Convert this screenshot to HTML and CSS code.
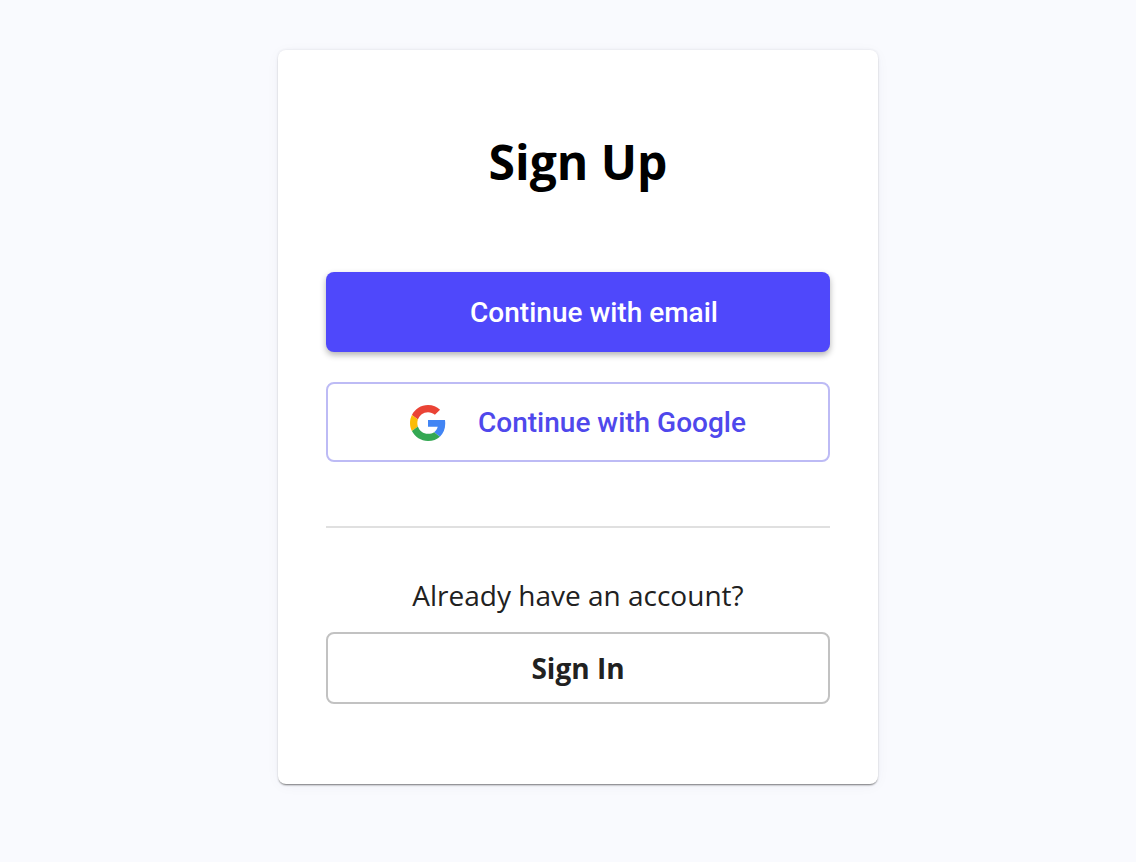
FILE: index.html
```html
<!DOCTYPE html>
<html lang="en">
<head>
<meta charset="utf-8">
<title>Sign Up</title>
<link rel="stylesheet" href="styles.css">
</head>
<body>
<main class="card">
  <h1 class="title">Sign Up</h1>
  <div class="actions">
    <button class="btn btn-primary" type="button">Continue with email</button>
    <button class="btn btn-google" type="button">
      <svg class="g-icon" viewBox="0 0 48 48" aria-hidden="true">
        <path fill="#EA4335" d="M24 9.5c3.54 0 6.71 1.22 9.21 3.6l6.85-6.85C35.9 2.38 30.47 0 24 0 14.62 0 6.51 5.38 2.56 13.22l7.98 6.19C12.43 13.72 17.74 9.5 24 9.5z"/>
        <path fill="#4285F4" d="M46.98 24.55c0-1.57-.15-3.09-.38-4.55H24v9.02h12.94c-.58 2.96-2.26 5.48-4.78 7.18l7.73 6c4.51-4.18 7.09-10.36 7.09-17.65z"/>
        <path fill="#FBBC05" d="M10.53 28.59c-.48-1.45-.76-2.99-.76-4.59s.27-3.14.76-4.59l-7.98-6.19C.92 16.46 0 20.12 0 24c0 3.88.92 7.54 2.56 10.78l7.97-6.19z"/>
        <path fill="#34A853" d="M24 48c6.48 0 11.93-2.13 15.89-5.81l-7.73-6c-2.15 1.45-4.92 2.3-8.16 2.3-6.26 0-11.57-4.22-13.47-9.91l-7.98 6.19C6.51 42.62 14.62 48 24 48z"/>
      </svg>
      <span>Continue with Google</span>
    </button>
  </div>
  <hr class="divider">
  <p class="prompt">Already have an account?</p>
  <button class="btn btn-signin" type="button">Sign In</button>
</main>
</body>
</html>
```
FILE: styles.css
```css
* { box-sizing: border-box; }
html, body { margin: 0; padding: 0; }
body {
  height: 862px;
  background: #f9fafe;
  font-family: "Open Sans", sans-serif;
  display: flex;
  justify-content: center;
  align-items: flex-start;
  padding: 50px 0 0 20px;
  overflow: hidden;
}
.card {
  width: 600px;
  height: 734px;
  background: #fff;
  border-radius: 8px;
  padding: 0 48px;
  box-shadow: 0 2px 2px -1px rgba(0,0,0,.5), 0 0 3px rgba(0,0,0,.1), 0 2px 14px rgba(60,60,90,.04);
  display: flex;
  flex-direction: column;
}
.title {
  margin: 79px 0 0;
  height: 66px;
  font-size: 48px;
  line-height: 66px;
  font-weight: 700;
  text-align: center;
  color: #000;
}
.actions {
  margin-top: 77px;
  display: flex;
  flex-direction: column;
  gap: 30px;
}
.btn {
  display: flex;
  align-items: center;
  justify-content: center;
  width: 100%;
  border-radius: 8px;
  font-size: 28px;
  padding: 0;
  background: #fff;
}
.btn-primary {
  height: 80px;
  border: 0;
  padding-left: 32px;
  background: #4f48fb;
  color: #fff;
  font-family: Roboto, sans-serif;
  font-weight: 500;
  box-shadow: 0 3px 6px rgba(0,0,0,.3);
}
.btn-google {
  height: 80px;
  border: 2px solid #bdbbf5;
  gap: 32px;
  color: #4f48ec;
  font-family: Roboto, sans-serif;
  font-weight: 500;
}
.g-icon { width: 36px; height: 36px; flex: none; margin-top: 2px; }
.divider {
  margin: 64px 0 0;
  height: 2px;
  border: 0;
  background: #e0e0e0;
}
.prompt {
  margin: 47px 0 0;
  height: 40px;
  font-size: 28px;
  line-height: 40px;
  text-align: center;
  color: #212121;
}
.btn-signin {
  margin-top: 17px;
  height: 72px;
  border: 2px solid #c2c2c2;
  color: #212121;
  font-family: "Open Sans", sans-serif;
  font-weight: 700;
  font-size: 28px;
}
```
